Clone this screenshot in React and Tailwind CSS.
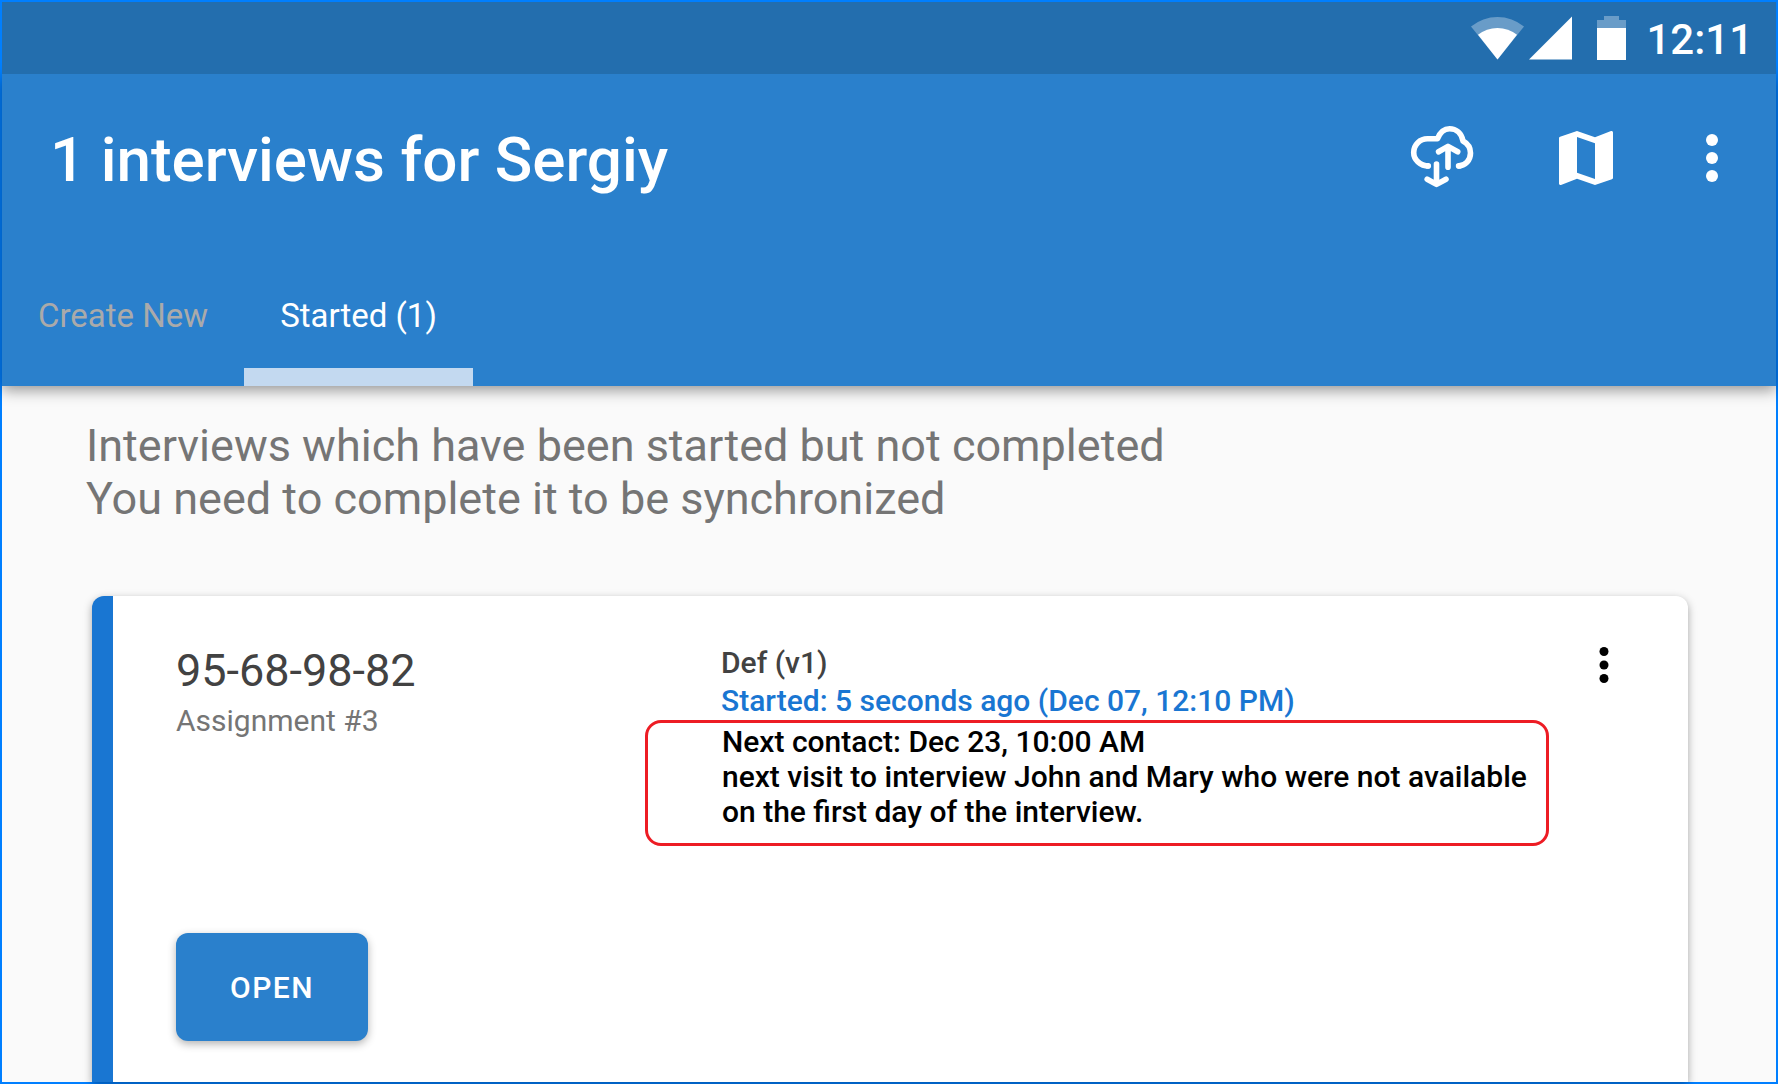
function WifiIcon() {
  return (
    <svg className="h-11 w-[53px]" viewBox="0 0 53 44" aria-hidden="true">
      <path d="M0 10.5A42 42 0 0 1 53 10.5L26.5 43.5Z" fill="#fff" fillOpacity=".32" />
      <path d="M7 18.8A31 31 0 0 1 46 18.8L26.5 43.5Z" fill="#fff" />
    </svg>
  );
}

function SignalIcon() {
  return (
    <svg className="h-11 w-[43px]" viewBox="0 0 43 44" aria-hidden="true">
      <path d="M43 .5V43.5H0Z" fill="#fff" />
    </svg>
  );
}

function BatteryIcon() {
  return (
    <svg className="h-11 w-[29px]" viewBox="0 0 29 44" aria-hidden="true">
      <path d="M7 0H22V4H29V12H0V4H7Z" fill="#fff" fillOpacity=".32" />
      <path d="M0 12H29V44H0Z" fill="#fff" />
    </svg>
  );
}

function SyncIcon() {
  return (
    <svg
      className="size-[72px]"
      viewBox="0 0 72 72"
      fill="none"
      stroke="#fff"
      strokeWidth="5.6"
      strokeLinecap="round"
      strokeLinejoin="round"
      aria-hidden="true"
    >
      <path
        strokeLinecap="butt"
        d="M22.8 44C14 44 7.7 37.6 7.7 30.5C7.7 22.5 14 16.8 21.5 16.8H31.5C34 10.5 38.5 6.8 43.6 6.8C50 6.8 55.5 11 57 19C61.5 21.5 64.5 25.8 64.5 31C64.5 38 59.5 44 52 44"
      />
      <path d="M22.3 43.9H21.7M52.6 43.900H53.2" />
      <path d="M42 45.300V25M32.600 29.800L42 24.400L51.700 29.800" />
      <path d="M30.500 42V61M21.200 57.200L30.500 62.400L40 57.200" />
    </svg>
  );
}

function MapIcon() {
  return (
    <svg className="size-[72px]" viewBox="0 0 24 24" fill="#fff" aria-hidden="true">
      <path d="M20.5 3l-.16.03L15 5.1 9 3 3.36 4.9c-.21.07-.36.25-.36.48V20.5c0 .28.22.5.5.5l.16-.03L9 18.9l6 2.1 5.64-1.9c.21-.07.36-.25.36-.48V3.5c0-.28-.22-.5-.5-.5zM15 19l-6-2.11V5l6 2.11V19z" />
    </svg>
  );
}

function MoreIcon({ className }) {
  return (
    <svg className={className} viewBox="0 0 24 24" fill="currentColor" aria-hidden="true">
      <circle cx="12" cy="6" r="2" />
      <circle cx="12" cy="12" r="2" />
      <circle cx="12" cy="18" r="2" />
    </svg>
  );
}

function StatusBar() {
  return (
    <div className="relative z-10 flex h-[72px] items-center justify-end bg-[#236eae] pr-[23px] text-white">
      <WifiIcon />
      <span className="w-[5px]" />
      <SignalIcon />
      <span className="w-[25px]" />
      <BatteryIcon />
      <time className="ml-5 pt-1 text-[42px] leading-[50px] font-medium">12:11</time>
    </div>
  );
}

function Header() {
  return (
    <header className="relative bg-[#2a80cc] text-white shadow-[0_4px_14px_rgba(0,0,0,0.42)]">
      <div className="flex h-[168px] items-center pr-7 pl-12">
        <h1 className="flex-1 pt-1 text-[62px] leading-[72px] font-medium">1 interviews for Sergiy</h1>
        <button type="button" aria-label="Synchronize" className="mr-[72px]">
          <SyncIcon />
        </button>
        <button type="button" aria-label="Map" className="mr-[54px]">
          <MapIcon />
        </button>
        <button type="button" aria-label="More options">
          <MoreIcon className="size-[72px]" />
        </button>
      </div>
      <nav className="flex h-36" role="tablist">
        <button type="button" role="tab" aria-selected="false" className="px-9 pt-1 text-[33px] text-[#aaaaaa]">
          Create New
        </button>
        <button
          type="button"
          role="tab"
          aria-selected="true"
          className="border-b-[18px] border-[#c3d9f0] px-9 pt-[22px] text-[33px]"
        >
          Started (1)
        </button>
      </nav>
    </header>
  );
}

function InterviewCard() {
  return (
    <article className="mt-[71px] mr-[88px] ml-[90px] flex-1 rounded-t-xl border-l-[21px] border-[#1976d2] bg-white pt-[42px] pr-[57px] pl-[63px] shadow-[0_3px_8px_rgba(0,0,0,0.34)]">
      <div className="grid grid-cols-[469px_1fr_auto] items-start">
        <div className="pt-1.5">
          <h2 className="text-[45px] leading-[53px] text-[#424242]">95-68-98-82</h2>
          <p className="mt-1.5 text-[30px] leading-9 text-[#757575]">Assignment #3</p>
        </div>
        <div className="pt-[7px] text-[30px] font-medium">
          <p className="pl-[76px] leading-9 text-[#424242]">Def (v1)</p>
          <p className="mt-0.5 mb-px pl-[76px] leading-9 text-[#1976d2]">
            Started: 5 seconds ago (Dec 07, 12:10 PM)
          </p>
          <div className="rounded-2xl border-3 border-[#ed1c24] pt-px pr-2 pb-3.5 pl-[74px] leading-[35px] text-black">
            <p>Next contact: Dec 23, 10:00 AM</p>
            <p>next visit to interview John and Mary who were not available on the first day of the interview.</p>
          </div>
        </div>
        <button type="button" aria-label="Interview options" className="ml-7 text-black">
          <MoreIcon className="size-[54px]" />
        </button>
      </div>
      <button
        type="button"
        className="mt-[87px] h-[108px] rounded-xl bg-[#2a80cc] px-[54px] text-[30px] font-medium tracking-wider text-white shadow-[0_3px_8px_rgba(0,0,0,0.3)]"
      >
        OPEN
      </button>
    </article>
  );
}

export default function App() {
  return (
    <div className="flex min-h-screen flex-col border-2 border-[#007fff] bg-[#fafafa] font-[Roboto,sans-serif]">
      <StatusBar />
      <Header />
      <main className="flex flex-1 flex-col">
        <p className="pt-[33px] pl-[84px] text-[45px] leading-[53px] text-[#757575]">
          Interviews which have been started but not completed
          <br />
          You need to complete it to be synchronized
        </p>
        <InterviewCard />
      </main>
    </div>
  );
}
